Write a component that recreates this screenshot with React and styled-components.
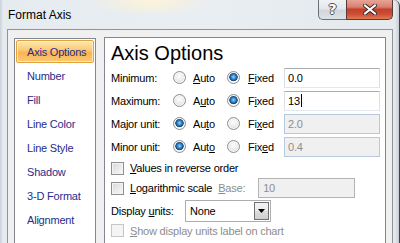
import React from 'react';
import styled, { createGlobalStyle } from 'styled-components';

const GlobalStyle = createGlobalStyle`
  html, body {
    margin: 0;
    padding: 0;
    width: 400px;
    height: 243px;
    overflow: hidden;
    background: #dfe5ea;
  }
  * {
    box-sizing: border-box;
  }
`;

const FONT = `'Liberation Sans', Arial, sans-serif`;

const sections = [
  'Axis Options',
  'Number',
  'Fill',
  'Line Color',
  'Line Style',
  'Shadow',
  '3-D Format',
  'Alignment',
];

const bounds = [
  { label: 'Minimum:', auto: ['', 'A', 'uto'], fixed: ['', 'F', 'ixed'], auto_on: false, value: '0.0' },
  { label: 'Maximum:', auto: ['A', 'u', 'to'], fixed: ['F', 'i', 'xed'], auto_on: false, value: '13', caret: true },
  { label: 'Major unit:', auto: ['Au', 't', 'o'], fixed: ['Fi', 'x', 'ed'], auto_on: true, value: '2.0' },
  { label: 'Minor unit:', auto: ['Aut', 'o', ''], fixed: ['Fix', 'e', 'd'], auto_on: true, value: '0.4' },
];

export default function App() {
  return (
    <>
      <GlobalStyle />
      <Window>
        <TitleBar>
          <Title>Format Axis</Title>
          <Captions>
            <HelpButton>?</HelpButton>
            <CloseButton>
              <svg width='14' height='11' viewBox='0 0 14 11'>
                <path d='M2 1.5 L12 9.5 M12 1.5 L2 9.5' stroke='#3b2a26' strokeWidth='4' strokeLinecap='square' />
                <path d='M2 1.5 L12 9.5 M12 1.5 L2 9.5' stroke='#ffffff' strokeWidth='2' strokeLinecap='square' />
              </svg>
            </CloseButton>
          </Captions>
        </TitleBar>
        <Body>
          <SectionList>
            {sections.map((name, i) => (
              <SectionItem key={name} $selected={i === 0}>
                {name}
              </SectionItem>
            ))}
          </SectionList>
          <Panel>
            <Heading>Axis Options</Heading>
            {bounds.map((row) => (
              <OptionRow key={row.label}>
                <RowLabel>{row.label}</RowLabel>
                <Choice $width={54}>
                  <Radio $checked={row.auto_on} />
                  <span>
                    {row.auto[0]}
                    <Key>{row.auto[1]}</Key>
                    {row.auto[2]}
                  </span>
                </Choice>
                <Choice $width={57} $gap={8}>
                  <Radio $checked={!row.auto_on} />
                  <span>
                    {row.fixed[0]}
                    <Key>{row.fixed[1]}</Key>
                    {row.fixed[2]}
                  </span>
                </Choice>
                <TextBox $disabled={row.auto_on}>
                  {row.value}
                  {row.caret && <Caret />}
                </TextBox>
              </OptionRow>
            ))}
            <CheckRow>
              <CheckItem>
                <CheckBox />
                <span>
                  <Key>V</Key>alues in reverse order
                </span>
              </CheckItem>
            </CheckRow>
            <CheckRow>
              <CheckItem>
                <CheckBox />
                <span>
                  <Key>L</Key>ogarithmic scale
                </span>
              </CheckItem>
              <BaseLabel>
                <Key>B</Key>ase:
              </BaseLabel>
              <BaseBox>10</BaseBox>
            </CheckRow>
            <UnitsRow>
              <RowLabel $width={74}>
                Display <Key>u</Key>nits:
              </RowLabel>
              <Select>
                <span>None</span>
                <DropButton>
                  <svg width='7' height='4' viewBox='0 0 7 4'>
                    <path d='M0 0 H7 L3.5 4 Z' fill='#000' />
                  </svg>
                </DropButton>
              </Select>
            </UnitsRow>
            <CheckRow $height={15}>
              <CheckItem $disabled>
                <CheckBox $disabled />
                <span>
                  <Key>S</Key>how display units label on chart
                </span>
              </CheckItem>
            </CheckRow>
          </Panel>
        </Body>
      </Window>
    </>
  );
}

const Window = styled.div`
  width: 400px;
  height: 243px;
  display: flex;
  flex-direction: column;
  font-family: ${FONT};
  font-size: 11px;
  letter-spacing: -0.2px;
  color: #000;
  border-right: 1px solid #3f464d;
  border-top-right-radius: 6px;
  overflow: hidden;
  background:
    radial-gradient(ellipse 60px 14px at 150px 2px, rgba(255, 244, 214, 0.9), rgba(255, 244, 214, 0)),
    linear-gradient(90deg, #c9d0d6 0px, #e6ebef 3px, #e9eef2 50%, #e4e9ee calc(100% - 4px), #c6ccd2 100%);
`;

const TitleBar = styled.div`
  height: 29px;
  flex-shrink: 0;
  display: flex;
  align-items: flex-start;
  padding-left: 8px;
`;

const Title = styled.div`
  font-size: 12px;
  line-height: 14px;
  letter-spacing: 0;
  padding-top: 8px;
  color: #000;
`;

const Captions = styled.div`
  margin-left: auto;
  margin-right: 6px;
  margin-top: -1px;
  display: flex;
`;

const HelpButton = styled.div`
  width: 28px;
  height: 21px;
  border: 1px solid #6b7077;
  border-right: none;
  border-top: none;
  border-bottom-left-radius: 5px;
  background: linear-gradient(180deg, #f1f3f5 0%, #e3e7eb 50%, #cfd5db 55%, #dde2e6 100%);
  display: flex;
  align-items: center;
  justify-content: center;
  font-family: 'DejaVu Sans', sans-serif;
  font-weight: bold;
  font-size: 14px;
  color: #fff;
  text-shadow:
    1px 0 0 #4c4f55,
    -1px 0 0 #4c4f55,
    0 1px 0 #4c4f55,
    0 -1px 0 #4c4f55;
`;

const CloseButton = styled.div`
  width: 47px;
  height: 21px;
  border: 1px solid #5a3a36;
  border-top: none;
  border-bottom-right-radius: 5px;
  background: linear-gradient(180deg, #e9a99b 0%, #d98070 40%, #c3402d 52%, #cc4d33 75%, #e07a52 100%);
  display: flex;
  align-items: center;
  justify-content: center;
`;

const Body = styled.div`
  flex: 1;
  margin: 0 6px 0 7px;
  border: 1px solid #8b949c;
  border-bottom: none;
  background: #f0f0f0;
  display: flex;
  align-items: flex-start;
  gap: 8px;
  padding: 8px 6px 0 6px;
`;

const SectionList = styled.div`
  width: 82px;
  height: 220px;
  flex-shrink: 0;
  background: #fff;
  border: 1px solid #828790;
`;

const SectionItem = styled.div`
  height: 23px;
  margin: 1px 1px 0;
  padding-left: 10px;
  display: flex;
  align-items: center;
  white-space: nowrap;
  color: #1f2d8c;
  border: 1px solid ${(p) => (p.$selected ? '#e4a23c' : 'transparent')};
  border-radius: 2px;
  background: ${(p) =>
    p.$selected
      ? 'linear-gradient(180deg, #fde9b0 0%, #fcc774 45%, #f9b44f 55%, #fbca78 100%)'
      : 'transparent'};
  box-shadow: ${(p) => (p.$selected ? 'inset 0 0 0 1px rgba(255, 246, 214, 0.7)' : 'none')};
`;

const Panel = styled.div`
  width: 282px;
  height: 220px;
  flex-shrink: 0;
  margin-top: -1px;
  background: #fff;
  border: 1px solid #828790;
  padding-left: 6px;
  display: flex;
  flex-direction: column;
`;

const Heading = styled.div`
  font-size: 20px;
  line-height: 22px;
  letter-spacing: 0;
  margin-top: 4px;
  margin-bottom: 2px;
  color: #000;
`;

const OptionRow = styled.div`
  height: 23px;
  display: flex;
  align-items: center;
`;

const RowLabel = styled.div`
  width: ${(p) => p.$width || 62}px;
  flex-shrink: 0;
  white-space: nowrap;
`;

const Key = styled.span`
  text-decoration: underline;
`;

const Choice = styled.div`
  width: ${(p) => p.$width}px;
  flex-shrink: 0;
  display: flex;
  align-items: center;
  gap: ${(p) => p.$gap || 7}px;
  white-space: nowrap;
`;

const Radio = styled.span`
  width: 13px;
  height: 13px;
  flex-shrink: 0;
  border-radius: 50%;
  border: 1px solid #8e8f8f;
  background: ${(p) =>
    p.$checked
      ? 'radial-gradient(circle at 50% 45%, #8fdcff 0px, #3a8fd0 2px, #174f8e 3.6px, #2a4f78 4px, #f4f4f4 4.6px, #dadada 100%)'
      : 'radial-gradient(circle at 50% 40%, #fdfdfd 0px, #f1f1f1 3px, #d6d6d6 100%)'};
  box-shadow: inset 0 0 0 1px #f6f6f6;
`;

const TextBox = styled.div`
  width: 96px;
  height: 20px;
  flex-shrink: 0;
  display: flex;
  align-items: center;
  padding-left: 3px;
  border: 1px solid ${(p) => (p.$disabled ? '#b7c9de' : '#abadb3')};
  border-left-color: ${(p) => (p.$disabled ? '#b7c9de' : '#dbdfe6')};
  border-right-color: ${(p) => (p.$disabled ? '#b7c9de' : '#dbdfe6')};
  border-bottom-color: ${(p) => (p.$disabled ? '#b7c9de' : '#e3e9ef')};
  background: ${(p) => (p.$disabled ? '#f0f0f0' : '#fff')};
  color: ${(p) => (p.$disabled ? '#8d8d8d' : '#000')};
`;

const Caret = styled.span`
  width: 1px;
  height: 13px;
  margin-left: 1px;
  background: #000;
`;

const CheckRow = styled.div`
  height: ${(p) => p.$height || 20}px;
  display: flex;
  align-items: center;
`;

const CheckItem = styled.div`
  flex-shrink: 0;
  display: flex;
  align-items: center;
  gap: 6px;
  white-space: nowrap;
  color: ${(p) => (p.$disabled ? '#8d8d8d' : '#000')};
`;

const CheckBox = styled.span`
  width: 13px;
  height: 13px;
  flex-shrink: 0;
  border: 1px solid ${(p) => (p.$disabled ? '#c6c6c6' : '#8e8f8f')};
  background: ${(p) =>
    p.$disabled ? '#f4f4f4' : 'linear-gradient(135deg, #d8d8d8 0%, #ececec 60%, #f9f9f9 100%)'};
  box-shadow: inset 0 0 0 1px ${(p) => (p.$disabled ? '#f4f4f4' : '#f3f3f3')};
`;

const BaseLabel = styled.div`
  margin-left: 6px;
  width: 40px;
  flex-shrink: 0;
  color: #8d8d8d;
  white-space: nowrap;
`;

const BaseBox = styled.div`
  width: 97px;
  height: 20px;
  display: flex;
  align-items: center;
  padding-left: 4px;
  border: 1px solid #b3b3b3;
  background: #f0f0f0;
  color: #8d8d8d;
`;

const UnitsRow = styled.div`
  height: 24px;
  margin-top: 1px;
  display: flex;
  align-items: center;
`;

const Select = styled.div`
  width: 86px;
  height: 22px;
  display: flex;
  align-items: center;
  justify-content: space-between;
  padding: 0 1px 0 4px;
  border: 1px solid #abadb3;
  background: #fff;
`;

const DropButton = styled.div`
  width: 15px;
  height: 18px;
  display: flex;
  align-items: center;
  justify-content: center;
  border: 1px solid #707070;
  background: linear-gradient(180deg, #f2f2f2 0%, #ebebeb 50%, #dddddd 51%, #cfcfcf 100%);
`;
